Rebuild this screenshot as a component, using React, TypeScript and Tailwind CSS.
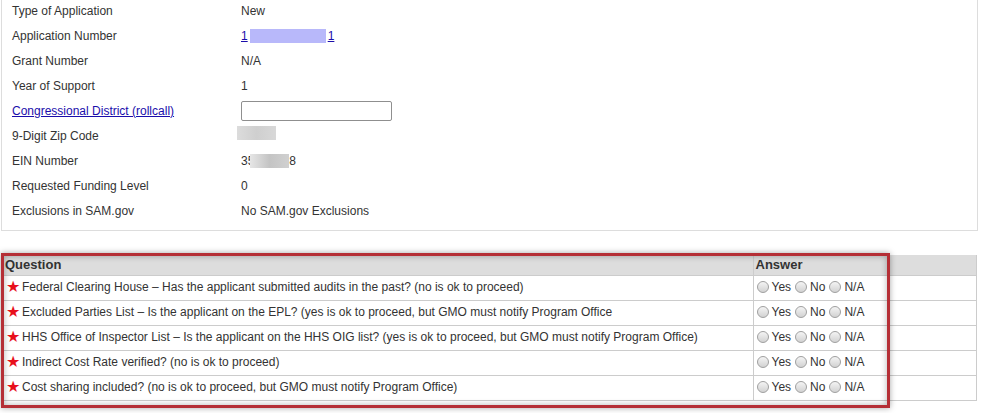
import React from "react";

const details: { label: React.ReactNode; value: React.ReactNode }[] = [
  { label: "Type of Application", value: "New" },
  {
    label: "Application Number",
    value: (
      <a href="#" className="inline-flex items-center text-[#1a0dab] underline decoration-[#1a0dab]">
        <span>1</span>
        <span className="mx-[2px] inline-block h-[14px] w-[76px] bg-[#b8b8fa]" />
        <span>1</span>
      </a>
    ),
  },
  { label: "Grant Number", value: "N/A" },
  { label: "Year of Support", value: "1" },
  {
    label: (
      <a href="#" className="text-[#1a0dab] underline">
        Congressional District (rollcall)
      </a>
    ),
    value: (
      <input
        type="text"
        className="h-[20px] w-[151px] rounded-[2px] border border-[#8f8f8f] bg-white outline-none"
      />
    ),
  },
  {
    label: "9-Digit Zip Code",
    value: <span className="-ml-[4px] inline-block h-[14px] w-[39px] bg-gradient-to-r from-[#dcdcdc] via-[#cfcfcf] to-[#d8d8d8]" />,
  },
  {
    label: "EIN Number",
    value: (
      <span className="inline-flex items-center">
        <span>35</span>
        <span className="relative -ml-[4px] inline-block h-[14px] w-[39px] bg-gradient-to-r from-[#e6e6e6] via-[#c4c4c4] to-[#d0d0d0]" />
        <span>8</span>
      </span>
    ),
  },
  { label: "Requested Funding Level", value: "0" },
  { label: "Exclusions in SAM.gov", value: "No SAM.gov Exclusions" },
];

const questions = [
  "Federal Clearing House – Has the applicant submitted audits in the past? (no is ok to proceed)",
  "Excluded Parties List – Is the applicant on the EPL? (yes is ok to proceed, but GMO must notify Program Office",
  "HHS Office of Inspector List – Is the applicant on the HHS OIG list? (yes is ok to proceed, but GMO must notify Program Office)",
  "Indirect Cost Rate verified? (no is ok to proceed)",
  "Cost sharing included? (no is ok to proceed, but GMO must notify Program Office)",
];

function Radio() {
  return (
    <span className="inline-block h-[12px] w-[12px] rounded-full border border-[#a0a0a0] bg-gradient-to-b from-[#f4f4f4] to-[#d2d2d2]" />
  );
}

export default function App() {
  return (
    <div
      className="relative h-[413px] w-[988px] overflow-hidden bg-white text-[12px] text-[#333]"
      style={{ fontFamily: '"Liberation Sans", Arial, sans-serif' }}
    >
      {/* application details */}
      <div className="-mt-[2px] ml-px w-[977px] border-x border-b border-[#dddddd] pb-[7px]">
        {details.map((d, i) => (
          <div key={i} className="flex h-[25px] items-center">
            <div className="w-[239px] pl-[10px]">{d.label}</div>
            <div>{d.value}</div>
          </div>
        ))}
      </div>

      {/* checklist */}
      <table className="ml-[3px] mt-[24px] w-[974px] border-collapse">
        <thead>
          <tr className="h-[20px] bg-[#dddddd] text-left text-[13px] font-bold">
            <th className="w-[750px] border-b border-[#cccccc] pl-[2px] font-bold">Question</th>
            <th className="border-b border-l border-r border-[#cccccc] pl-[2px] font-bold">Answer</th>
          </tr>
        </thead>
        <tbody>
          {questions.map((q) => (
            <tr key={q} className="h-[25px]">
              <td className="border-b border-[#cccccc] pl-[3px]">
                <span className="inline-flex items-center">
                  <span className="mr-[3px] w-[13px] text-[16px] leading-none text-[#e8101c]">★</span>
                  {q}
                </span>
              </td>
              <td className="border-b border-l border-r border-[#cccccc] pl-[3px]">
                <span className="inline-flex items-center gap-[3px]">
                  <Radio />
                  <span className="mr-[1px]">Yes</span>
                  <Radio />
                  <span className="mr-[1px]">No</span>
                  <Radio />
                  <span>N/A</span>
                </span>
              </td>
            </tr>
          ))}
        </tbody>
      </table>

      {/* annotation box */}
      <div className="pointer-events-none absolute left-[1px] top-[253px] h-[155px] w-[889px] border-[3px] border-[#b52f36] shadow-[0_0_6px_rgba(0,0,0,0.35),inset_0_0_6px_rgba(0,0,0,0.3)]" />
    </div>
  );
}
